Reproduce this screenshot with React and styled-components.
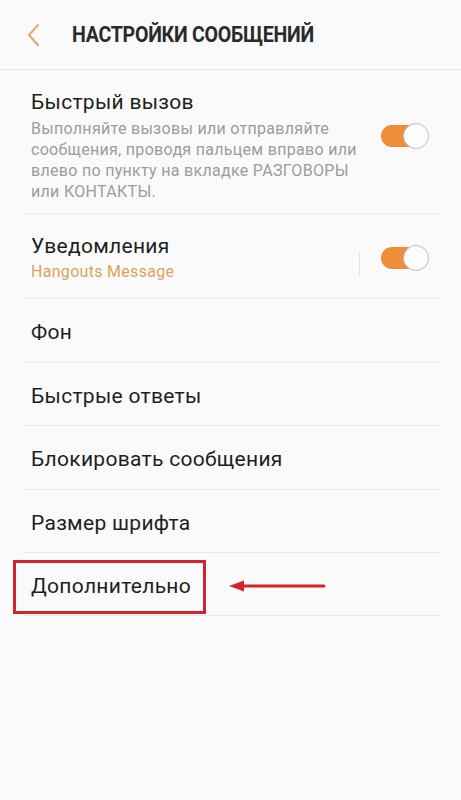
import React from "react";
import styled, { createGlobalStyle } from "styled-components";

const Global = createGlobalStyle`
  html, body { margin: 0; padding: 0; background: #fafafa; }
  body { font-family: Roboto, "Noto Sans", sans-serif; -webkit-font-smoothing: antialiased; }
`;

const Screen = styled.div`
  width: 461px;
  height: 800px;
  background: #fafafa;
  position: relative;
  overflow: hidden;
`;

const Header = styled.header`
  height: 69px;
  display: flex;
  align-items: center;
  border-bottom: 1px solid #e6e6e6;
  padding-left: 26px;
  gap: 30px;
`;

const Back = styled.svg`
  width: 16px;
  height: 22px;
  flex: none;
`;

const Title = styled.h1`
  margin: 0;
  font-family: Roboto, sans-serif;
  font-weight: 700;
  font-size: 22px;
  color: #2a2a2a;
  letter-spacing: -0.3px;
  transform: scaleX(0.89);
  transform-origin: left center;
  white-space: nowrap;
`;

const List = styled.div`
  padding: 0 21px 0 24px;
`;

const Row = styled.div`
  display: flex;
  align-items: center;
  border-bottom: 1px solid #e9e9e9;
  padding: ${(p) => p.$pad || "3px 0 0"};
  height: ${(p) => p.$h || 63}px;
  box-sizing: border-box;
  position: relative;
`;

const Texts = styled.div`
  flex: ${(p) => (p.$fixed ? "none" : 1)};
  padding-left: 7px;
`;

const Label = styled.div`
  font-size: 21px;
  line-height: 26px;
  letter-spacing: 0.3px;
  color: #1e1e1e;
`;

const Sub = styled.div`
  margin-top: ${(p) => p.$mt || 0}px;
  font-size: 16px;
  line-height: ${(p) => p.$lh || 21}px;
  letter-spacing: 0.3px;
  color: ${(p) => p.$color || "#9c9c9c"};
  white-space: nowrap;
`;

const SideDivider = styled.div`
  width: 1px;
  align-self: stretch;
  margin: 20px 21px 8px 0;
  background: #e2e2e2;
`;

const Toggle = styled.div`
  position: relative;
  width: 48px;
  height: 26px;
  flex: none;
  margin-right: 11px;
  margin-top: ${(p) => p.$mt || 0}px;
`;

const Track = styled.div`
  position: absolute;
  left: 0;
  top: 2px;
  width: 42px;
  height: 22px;
  border-radius: 11px;
  background: #f08d38;
`;

const Knob = styled.div`
  position: absolute;
  right: 0;
  top: 0;
  width: 24px;
  height: 24px;
  border-radius: 50%;
  background: #fdfdfd;
  border: 1px solid #bdbdbd;
`;

const Highlight = styled.div`
  position: absolute;
  left: -11px;
  top: 7px;
  width: 193px;
  height: 54px;
  box-sizing: border-box;
  border: 3px solid #d5232b;
`;

const Arrow = styled.svg`
  margin-left: 37px;
  width: 98px;
  height: 14px;
  flex: none;
`;

const simple = [
  ["Фон", 64],
  ["Быстрые ответы", 63],
  ["Блокировать сообщения", 64],
  ["Размер шрифта", 63],
];

export default function App() {
  return (
    <Screen>
      <Global />
      <Header>
        <Back viewBox="0 0 16 22">
          <defs>
            <linearGradient id="bg" x1="0" y1="0" x2="0" y2="1">
              <stop offset="0" stopColor="#e7b36c" />
              <stop offset="1" stopColor="#d9a560" />
            </linearGradient>
          </defs>
          <path d="M12 1 L3 11 L12 21" fill="none" stroke="url(#bg)" strokeWidth="2" strokeLinecap="round" strokeLinejoin="round" />
        </Back>
        <Title>НАСТРОЙКИ СООБЩЕНИЙ</Title>
      </Header>
      <List>
        <Row $pad="18px 0 11px" $h={144}>
          <Texts>
            <Label>Быстрый вызов</Label>
            <Sub $mt={3}>
              Выполняйте вызовы или отправляйте<br />
              сообщения, проводя пальцем вправо или<br />
              влево по пункту на вкладке РАЗГОВОРЫ<br />
              или КОНТАКТЫ.
            </Sub>
          </Texts>
          <Toggle $mt={-18}>
            <Track />
            <Knob />
          </Toggle>
        </Row>
        <Row $pad="19px 0 15px" $h={85}>
          <Texts>
            <Label>Уведомления</Label>
            <Sub $mt={2} $lh={22} $color="#dba45e">Hangouts Message</Sub>
          </Texts>
          <SideDivider />
          <Toggle>
            <Track />
            <Knob />
          </Toggle>
        </Row>
        {simple.map(([t, h]) => (
          <Row key={t} $h={h}>
            <Texts>
              <Label>{t}</Label>
            </Texts>
          </Row>
        ))}
        <Row $h={63}>
          <Highlight />
          <Texts $fixed>
            <Label>Дополнительно</Label>
          </Texts>
          <Arrow viewBox="0 0 98 14">
            <path d="M14 7 H96" stroke="#d5232b" strokeWidth="3" strokeLinecap="round" />
            <path d="M1 7 L16 1.5 L16 12.5 Z" fill="#d5232b" />
          </Arrow>
        </Row>
      </List>
    </Screen>
  );
}
